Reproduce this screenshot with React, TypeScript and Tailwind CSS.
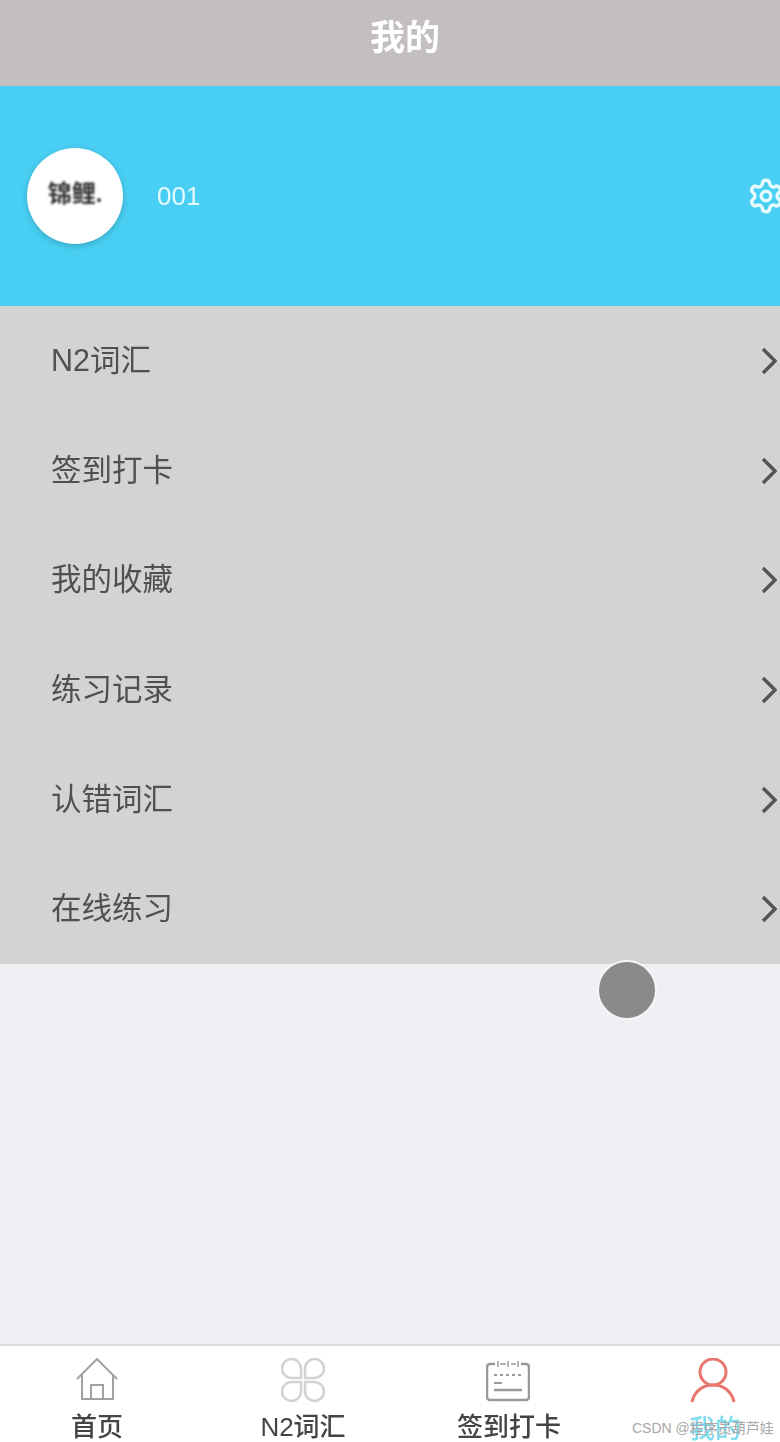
import { Settings } from "lucide-react";

const rows = ["N2词汇", "签到打卡", "我的收藏", "练习记录", "认错词汇", "在线练习"];

function HomeIcon() {
  return (
    <svg width="44" height="44" viewBox="0 0 44 44" fill="none" stroke="#a3a0a0" strokeWidth="2">
      <path d="M2 21 22 1l20 20" />
      <path d="M7 17v24h31V17" />
      <path d="M16 41V27h12v14" />
    </svg>
  );
}

function FlowerIcon() {
  return (
    <svg width="44" height="44" viewBox="0 0 44 44" fill="none" stroke="#d2d2d2" strokeWidth="2.5">
      <path d="M20 17v3h-9.500a9.500 9.500 0 1 1 9.500-9.500z" />
      <path d="M24 17v3h9.500a9.500 9.500 0 1 0-9.500-9.500z" />
      <path d="M20 27v-3h-9.500a9.500 9.500 0 1 0 9.500 9.500z" />
      <path d="M24 27v-3h9.500a9.500 9.500 0 1 1-9.500 9.500z" />
    </svg>
  );
}

function CalendarIcon() {
  return (
    <svg width="44" height="44" viewBox="0 0 44 44" fill="none" stroke="#9a9a9a" strokeWidth="2.500" className="-translate-x-[1px]">
      <path d="M9 6H4a3 3 0 0 0-3 3v30a3 3 0 0 0 3 3h36a3 3 0 0 0 3-3V9a3 3 0 0 0-3-3h-5" />
      <path d="M14 6h6M25 6h5" strokeWidth="1.500" />
      <path d="M12 3v6M22 3v6M32 3v6" strokeWidth="1.500" />
      <path d="M8 17h28" strokeWidth="2" strokeDasharray="3 3" />
      <path d="M8 25h8" strokeWidth="2" />
      <path d="M8 32h28" strokeWidth="2.500" />
    </svg>
  );
}

function UserIcon() {
  return (
    <svg width="46" height="46" viewBox="0 0 46 46" fill="none" stroke="#e8766c" strokeWidth="3" className="-translate-x-[2px]">
      <circle cx="23" cy="14" r="13" />
      <path d="M2 44c2-10 10-17 21-17s19 7 21 17" />
    </svg>
  );
}

const tabs = [
  { label: "首页", icon: <HomeIcon />, color: "text-[#444444]" },
  { label: "N2词汇", icon: <FlowerIcon />, color: "text-[#444444]" },
  { label: "签到打卡", icon: <CalendarIcon />, color: "text-[#444444]" },
  { label: "我的", icon: <UserIcon />, color: "text-[#7fdcef]" },
];

export default function App() {
  return (
    <div className="relative flex h-[1442px] w-[780px] flex-col overflow-hidden bg-[#f1eff3] font-['Liberation_Sans','Noto_Sans_CJK_SC',sans-serif]">
      <div className="flex h-[86px] items-center justify-center bg-[#c4bfbf] pb-[10px] pl-[30px] text-[35px] font-bold text-white blur-[0.6px]">
        我的
      </div>

      <div className="flex h-[220px] items-center bg-[#48cff3] pl-[27px]">
        <div className="flex h-[96px] w-[96px] items-center justify-center rounded-full bg-white pb-1 text-[24px] font-bold text-[#333333] shadow-[0_2px_6px_rgba(0,0,0,0.2)]">
          <span className="blur-[0.8px]">锦鲤.</span>
        </div>
        <span className="ml-[34px] text-[26px] text-[#e6f9fd] blur-[0.5px]">001</span>
        <Settings className="ml-auto -mr-[5px] h-[38px] w-[38px] text-[#e6f9fd] blur-[0.5px]" strokeWidth={2.2} />
      </div>

      <div className="flex h-[658px] flex-col bg-[#d4d3d3]">
        {rows.map((row) => (
          <div key={row} className="flex flex-1 items-center justify-between pl-[51px] pr-[3px]">
            <span className="text-[30.500px] text-[#505050] blur-[0.6px]">{row}</span>
            <svg width="16" height="28" viewBox="0 0 16 28" fill="none" stroke="#555555" strokeWidth="3.500" className="blur-[0.4px]">
              <path d="M2 2l12 12L2 26" />
            </svg>
          </div>
        ))}
      </div>

      <div className="flex-1" />

      <div className="flex h-[98px] items-start justify-between border-t-2 border-[#dddddd] bg-white pl-[37px] pr-[5px] pt-[12px]">
        {tabs.map((tab) => (
          <div key={tab.label} className="flex w-[120px] flex-col items-center blur-[0.6px]">
            {tab.icon}
            <span className={`mt-[6px] whitespace-nowrap text-[26px] leading-[38px] font-medium ${tab.color}`}>{tab.label}</span>
          </div>
        ))}
      </div>

      {/* floating dot over the list edge */}
      <div className="absolute left-[597px] top-[960px] h-[60px] w-[60px] rounded-full border-[2px] border-[#f6f5f7] bg-[#8a8a8a] blur-[0.4px]" />

      {/* watermark */}
      <div className="absolute left-[632px] top-[1418px] whitespace-nowrap text-[14px] leading-[20px] text-[#a8a8a8]">
        CSDN @程序员葫芦娃
      </div>
    </div>
  );
}
